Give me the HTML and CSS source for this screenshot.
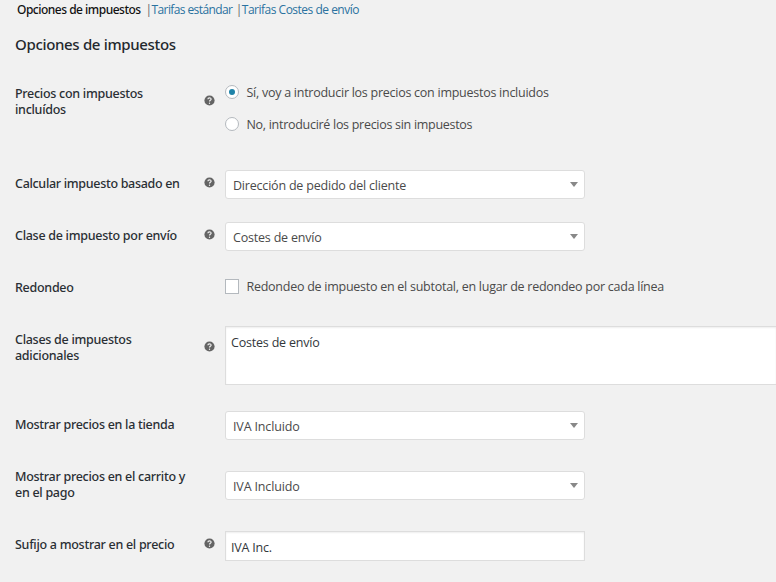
FILE: index.html
```
<!DOCTYPE html>
<html lang="es">
<head>
<meta charset="utf-8">
<title>Opciones de impuestos</title>
<link rel="stylesheet" href="styles.css">
</head>
<body>
<svg class="defs" width="0" height="0" aria-hidden="true">
  <symbol id="help" viewBox="0 0 11 11">
    <circle cx="5.5" cy="5.5" r="5.1" fill="#646464"/>
    <path d="M3.9 4.3C3.9 2.3 7.1 2.3 7.1 4.2C7.1 5.3 5.5 5.3 5.5 6.5" fill="none" stroke="#f1f1f1" stroke-width="1.2"/>
    <circle cx="5.5" cy="8.2" r=".7" fill="#f1f1f1"/>
  </symbol>
</svg>
<nav class="tabs">
  <a class="tab current">Opciones de impuestos</a><span class="bar">|</span><a class="tab first-link">Tarifas estándar</a><span class="bar">|</span><a class="tab">Tarifas Costes de envío</a>
</nav>
<h2 class="title">Opciones de impuestos</h2>
<form class="form">
  <div class="row row-radios">
    <div class="label">Precios con impuestos<br>incluídos</div>
    <svg class="help low"><use href="#help"/></svg>
    <div class="options">
      <label class="option"><span class="radio checked"></span><span class="text">Sí, voy a introducir los precios con impuestos incluidos</span></label>
      <label class="option"><span class="radio"></span><span class="text tight">No, introduciré los precios sin impuestos</span></label>
    </div>
  </div>
  <div class="row">
    <div class="label wide">Calcular impuesto basado en</div>
    <svg class="help"><use href="#help"/></svg>
    <div class="select"><span>Dirección de pedido del cliente</span><i class="arrow"></i></div>
  </div>
  <div class="row">
    <div class="label">Clase de impuesto por envío</div>
    <svg class="help"><use href="#help"/></svg>
    <div class="select"><span>Costes de envío</span><i class="arrow"></i></div>
  </div>
  <div class="row">
    <div class="label">Redondeo</div>
    <span></span>
    <label class="option check"><span class="checkbox"></span><span>Redondeo de impuesto en el subtotal, en lugar de redondeo por cada línea</span></label>
  </div>
  <div class="row row-area">
    <div class="label">Clases de impuestos<br>adicionales</div>
    <svg class="help low"><use href="#help"/></svg>
    <div class="textarea">Costes de envío</div>
  </div>
  <div class="row">
    <div class="label">Mostrar precios en la tienda</div>
    <span></span>
    <div class="select"><span class="iva">IVA Incluido</span><i class="arrow"></i></div>
  </div>
  <div class="row row-double">
    <div class="label">Mostrar precios en el carrito y<br>en el pago</div>
    <span></span>
    <div class="select"><span class="iva">IVA Incluido</span><i class="arrow"></i></div>
  </div>
  <div class="row">
    <div class="label">Sufijo a mostrar en el precio</div>
    <svg class="help"><use href="#help"/></svg>
    <div class="input">IVA Inc.</div>
  </div>
</form>
</body>
</html>
```
FILE: styles.css
```
* { box-sizing: border-box; }
body {
  margin: 0;
  height: 582px;
  overflow: hidden;
  background: #f1f1f1;
  color: #4a4a4a;
  font: 12.5px/16px "Open Sans", sans-serif;
  letter-spacing: -.26px;
  white-space: nowrap;
}
.defs { display: block; }
.tabs {
  display: flex;
  height: 20px;
  padding: 2px 0 0 17px;
  font-size: 12px;
  letter-spacing: -.5px;
}
.tab { color: #2a72a0; }
.tab.current {
  width: 125px;
  color: #111;
  font-family: "Noto Sans", sans-serif;
  font-weight: 500;
  letter-spacing: -.5px;
}
.first-link { letter-spacing: -.6px; }
.bar { width: 9.5px; padding-left: 3.5px; color: #666; }
.title {
  height: 55px;
  margin: 0;
  padding: 14px 0 0 15px;
  color: #23282d;
  font: 500 15px/20px "Noto Sans", sans-serif;
  letter-spacing: -.33px;
}
.row {
  display: grid;
  grid-template-columns: 188.5px 21.5px 1fr;
  align-items: start;
  height: 52px;
  padding-left: 15px;
}
.row-radios { height: 90px; }
.row-area { height: 85px; }
.row-double { height: 68px; }
.label {
  padding-top: 11px;
  color: #2a2f34;
  font-family: "Noto Sans", sans-serif;
  font-weight: 500;
  letter-spacing: -.28px;
}
.label.wide { letter-spacing: -.31px; }
.help { width: 11px; height: 11px; margin-top: 12px; }
.help.low { margin-top: 20px; }
.options { display: grid; gap: 16px; padding-top: 9px; }
.option { display: flex; align-items: center; gap: 7.5px; height: 16px; }
.option.check { margin-top: 10px; }
.text { padding-top: 2px; }
.tight { letter-spacing: -.29px; }
.radio {
  display: grid;
  place-items: center;
  width: 14px;
  height: 14px;
  border: 1px solid #b4b9be;
  border-radius: 50%;
  background: #fff;
}
.radio.checked::before {
  content: "";
  width: 6px;
  height: 6px;
  border-radius: 50%;
  background: #1f83a8;
}
.checkbox { width: 14px; height: 15px; margin-top: -1px; border: 1px solid #b4b9be; background: #fff; }
.select {
  display: flex;
  align-items: center;
  justify-content: space-between;
  width: 360px;
  height: 29px;
  margin-top: 5px;
  padding: 0 6px 0 7px;
  border: 1px solid #ddd;
  border-radius: 3px;
  background: #fff;
  letter-spacing: -.2px;
}
.select span { padding-top: 2px; }
.row-double .select { margin-top: 13px; }
.iva { letter-spacing: -.15px; }
.arrow {
  border: 4px solid transparent;
  border-top: 5px solid #888;
  border-bottom: 0;
}
.textarea, .input {
  margin-top: 5px;
  border: 1px solid #ddd;
  background: #fff;
  box-shadow: inset 0 1px 2px rgba(0, 0, 0, .07);
  color: #32373c;
  letter-spacing: -.2px;
}
.textarea { height: 59px; padding: 8px 5px; border-right: 0; }
.input { width: 360px; height: 30px; padding: 8px 5px 0; }
```
